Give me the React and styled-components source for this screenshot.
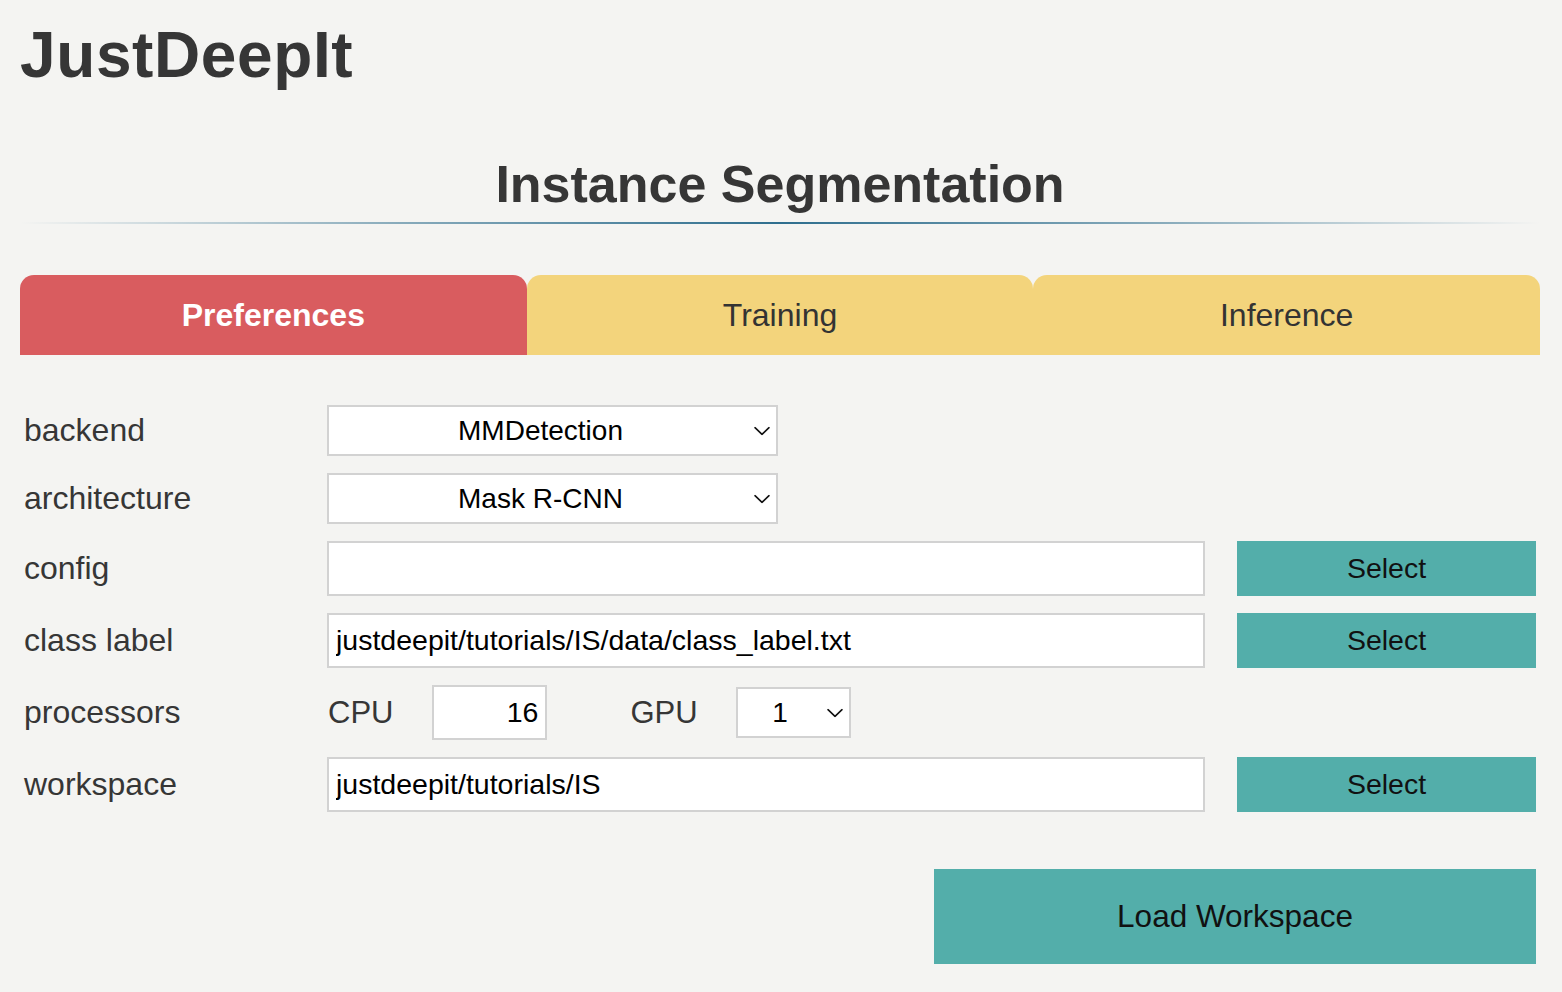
import React from 'react'
import styled, { createGlobalStyle } from 'styled-components'

const GlobalStyle = createGlobalStyle`
  html, body {
    margin: 0;
    padding: 0;
    background: #f4f4f2;
  }
  body {
    font-family: "Liberation Sans", Arial, Helvetica, sans-serif;
    color: #363636;
  }
`

function Chevron({ width = 16 }) {
  return (
    <svg width={width} height="9" viewBox="0 0 16 9" fill="none">
      <path d="M1 1.2 L8 7.8 L15 1.2" stroke="#111" strokeWidth="1.6" strokeLinecap="round" strokeLinejoin="round" />
    </svg>
  )
}

function Dropdown({ value, width, arrowSpace }) {
  return (
    <SelectWrap $width={width}>
      <Select value={value} onChange={() => {}} $arrowSpace={arrowSpace}>
        <option>{value}</option>
      </Select>
      <Arrow>
        <Chevron />
      </Arrow>
    </SelectWrap>
  )
}

function FileRow({ label, value }) {
  return (
    <Row>
      <Label>{label}</Label>
      <TextInput value={value} onChange={() => {}} />
      <SelectButton>Select</SelectButton>
    </Row>
  )
}

function App() {
  return (
    <Page>
      <GlobalStyle />
      <Brand>JustDeepIt</Brand>
      <SectionTitle>Instance Segmentation</SectionTitle>
      <Divider />

      <Tabs>
        <Tab $active>Preferences</Tab>
        <Tab>Training</Tab>
        <Tab>Inference</Tab>
      </Tabs>

      <Form>
        <Row $h={51}>
          <Label>backend</Label>
          <Dropdown value="MMDetection" width={451} arrowSpace={24} />
        </Row>
        <Row $h={51}>
          <Label>architecture</Label>
          <Dropdown value="Mask R-CNN" width={451} arrowSpace={24} />
        </Row>
        <FileRow label="config" value="" />
        <FileRow label="class label" value="justdeepit/tutorials/IS/data/class_label.txt" />
        <Row $h={55}>
          <Label>processors</Label>
          <Processors>
            <SubLabel>CPU</SubLabel>
            <NumberInput value="16" onChange={() => {}} />
            <SubLabel $gap>GPU</SubLabel>
            <Dropdown value="1" width={115} arrowSpace={26} />
          </Processors>
        </Row>
        <FileRow label="workspace" value="justdeepit/tutorials/IS" />
      </Form>

      <Actions>
        <LoadButton>Load Workspace</LoadButton>
      </Actions>
    </Page>
  )
}

export default App

const Page = styled.div`
  padding: 18px 22px 28px 20px;
`

const Brand = styled.h1`
  margin: 0;
  font-size: 64px;
  font-weight: 700;
  line-height: normal;
  color: #363636;
  letter-spacing: 0.6px;
`

const SectionTitle = styled.h2`
  margin: 62px 0 0;
  font-size: 52px;
  font-weight: 700;
  line-height: normal;
  text-align: center;
  color: #363636;
`

const Divider = styled.div`
  height: 2px;
  margin-top: 8px;
  background: linear-gradient(
    to right,
    rgba(46, 110, 142, 0) 0%,
    rgba(46, 110, 142, 0.55) 25%,
    #2e6e8e 50%,
    rgba(46, 110, 142, 0.55) 75%,
    rgba(46, 110, 142, 0) 100%
  );
`

const Tabs = styled.div`
  display: flex;
  margin-top: 51px;
`

const Tab = styled.div`
  flex: 1;
  height: 80px;
  display: flex;
  align-items: center;
  justify-content: center;
  border-radius: 14px 14px 0 0;
  font-size: 32px;
  font-weight: ${(p) => (p.$active ? 700 : 400)};
  color: ${(p) => (p.$active ? '#ffffff' : '#333333')};
  background: ${(p) => (p.$active ? '#d95c5f' : '#f3d47c')};
  cursor: pointer;
`

const Form = styled.div`
  display: flex;
  flex-direction: column;
  gap: 17px;
  margin-top: 50px;
  padding: 0 4px;
`

const Row = styled.div`
  display: flex;
  align-items: center;
  height: ${(p) => p.$h || 55}px;
`

const Label = styled.div`
  width: 303px;
  flex-shrink: 0;
  font-size: 32px;
  color: #363636;
`

const SelectWrap = styled.div`
  position: relative;
  width: ${(p) => p.$width}px;
  height: 100%;
`

const Select = styled.select`
  appearance: none;
  -webkit-appearance: none;
  width: 100%;
  height: 100%;
  box-sizing: border-box;
  border: 2px solid #d2d2d2;
  border-radius: 0;
  background: #ffffff;
  font-family: "Liberation Sans", Arial, sans-serif;
  font-size: 28px;
  color: #000;
  text-align: center;
  text-align-last: center;
  padding: 0 ${(p) => p.$arrowSpace}px 0 0;
  outline: none;
`

const Arrow = styled.span`
  position: absolute;
  right: 8px;
  top: 50%;
  transform: translateY(-50%);
  display: flex;
  pointer-events: none;
`

const TextInput = styled.input`
  width: 878px;
  height: 55px;
  box-sizing: border-box;
  border: 2px solid #d2d2d2;
  border-radius: 0;
  background: #ffffff;
  padding: 0 7px;
  font-family: "Liberation Sans", Arial, sans-serif;
  font-size: 28.5px;
  color: #000;
  outline: none;
`

const SelectButton = styled.button`
  width: 299px;
  height: 55px;
  margin-left: 32px;
  border: none;
  border-radius: 0;
  background: #53aeaa;
  font-family: "Liberation Sans", Arial, sans-serif;
  font-size: 28.5px;
  color: #111;
  cursor: pointer;
`

const Processors = styled.div`
  display: flex;
  align-items: center;
  height: 100%;
  & > ${SelectWrap} {
    height: 51px;
  }
`

const SubLabel = styled.span`
  font-size: 31px;
  color: #363636;
  margin-left: ${(p) => (p.$gap ? '83px' : '1px')};
  margin-right: ${(p) => (p.$gap ? '38px' : '39px')};
`

const NumberInput = styled.input`
  width: 115px;
  height: 55px;
  box-sizing: border-box;
  border: 2px solid #d2d2d2;
  border-radius: 0;
  background: #ffffff;
  padding: 0 7px;
  text-align: right;
  font-family: "Liberation Sans", Arial, sans-serif;
  font-size: 28.5px;
  color: #000;
  outline: none;
`

const Actions = styled.div`
  display: flex;
  justify-content: flex-end;
  margin-top: 57px;
  padding-right: 4px;
`

const LoadButton = styled.button`
  width: 602px;
  height: 95px;
  border: none;
  border-radius: 0;
  background: #53aeaa;
  font-family: "Liberation Sans", Arial, sans-serif;
  font-size: 31.5px;
  color: #111;
  cursor: pointer;
`
